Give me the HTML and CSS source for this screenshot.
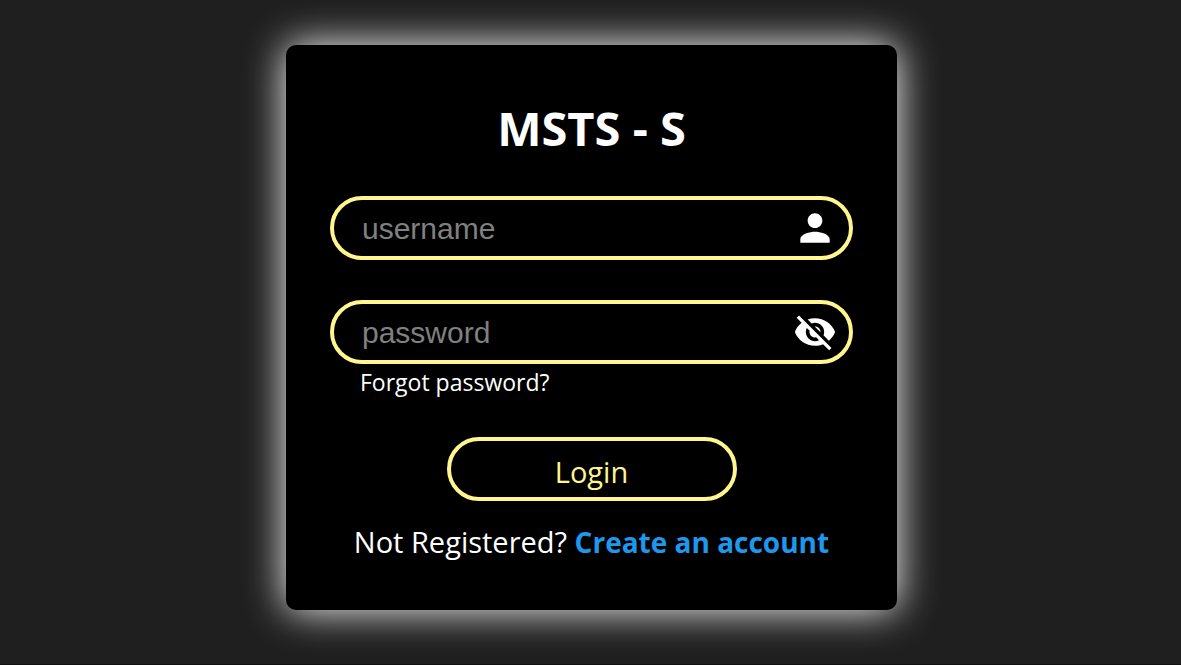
FILE: index.html
```html
<!DOCTYPE html>
<html lang="en">
<head>
<meta charset="utf-8">
<meta name="viewport" content="width=device-width, initial-scale=1">
<title>MSTS - S</title>
<link rel="stylesheet" href="styles.css">
</head>
<body>
<main class="card">
  <h1 class="title">MSTS - S</h1>
  <form class="form">
    <div class="field">
      <input class="input" type="text" placeholder="username" aria-label="username">
      <svg class="icon" viewBox="0 0 24 24" aria-hidden="true"><path d="M12 12c2.210 0 4-1.790 4-4s-1.790-4-4-4-4 1.790-4 4 1.790 4 4 4zm0 2c-2.670 0-8 1.340-8 4v2h16v-2c0-2.660-5.330-4-8-4z"/></svg>
    </div>
    <div class="field">
      <input class="input" type="password" placeholder="password" aria-label="password">
      <button class="toggle" type="button" aria-label="Show password">
        <svg class="icon" viewBox="0 0 24 24" aria-hidden="true"><path d="M12 7c2.760 0 5 2.240 5 5 0 .65-.13 1.260-.36 1.830l2.920 2.920c1.510-1.260 2.700-2.890 3.430-4.750-1.730-4.390-6-7.500-11-7.500-1.400 0-2.740.25-3.980.7l2.160 2.160C10.740 7.130 11.350 7 12 7zM2 4.270l2.280 2.280.46.46C3.080 8.300 1.780 10.020 1 12c1.730 4.390 6 7.500 11 7.500 1.550 0 3.030-.3 4.380-.84l.42.42L19.730 22 21 20.730 3.270 3 2 4.270zM7.530 9.800l1.550 1.550c-.05.21-.08.43-.08.65 0 1.660 1.340 3 3 3 .22 0 .44-.03.65-.08l1.550 1.550c-.67.33-1.410.53-2.200.53-2.760 0-5-2.240-5-5 0-.79.2-1.530.53-2.200zm4.310-.78l3.150 3.150.02-.16c0-1.660-1.340-3-3-3l-.17.01z"/></svg>
      </button>
    </div>
    <a class="forgot" href="#">Forgot password?</a>
    <button class="login" type="submit">Login</button>
  </form>
  <p class="register">Not Registered? <a class="create" href="#">Create an account</a></p>
</main>
</body>
</html>
```
FILE: styles.css
```css
* {
  box-sizing: border-box;
}

body {
  margin: 0;
  min-height: 100vh;
  padding: 36px 16px 45px 18px;
  display: flex;
  align-items: center;
  justify-content: center;
  background: #1f1f1f;
  border-bottom: 1px solid #111;
  color: #fff;
  font-family: "Segoe UI", "Open Sans", "Noto Sans", sans-serif;
}

.card {
  width: 100%;
  max-width: 611px;
  padding: 51px 44px 48px;
  border-radius: 10px;
  background: #000;
  box-shadow: 0 0 40px #fff;
}

.title {
  margin: 0 0 36px;
  font-size: 47px;
  line-height: 64px;
  font-weight: 700;
  text-align: center;
}

.form {
  display: flex;
  flex-direction: column;
}

.field {
  display: flex;
  align-items: center;
  height: 64px;
  padding: 0 12px 0 28px;
  border: 4px solid #fff68f;
  border-radius: 32px;
}

.field + .field {
  margin-top: 40px;
}

.input {
  flex: 1;
  min-width: 0;
  padding: 2px 0 0;
  border: 0;
  outline: 0;
  background: transparent;
  color: #fff;
  font: 30px/36px "Liberation Sans", Arial, sans-serif;
}

.input::placeholder {
  color: #808080;
  opacity: 1;
}

.icon {
  display: block;
  width: 44px;
  height: 44px;
  fill: #fff;
}

.toggle {
  padding: 0;
  border: 0;
  background: transparent;
}

.forgot {
  align-self: flex-start;
  margin: 2px 0 39px 30px;
  color: #fff;
  font-size: 23px;
  line-height: 32px;
  text-decoration: none;
}

.login {
  align-self: center;
  width: 290px;
  max-width: 100%;
  height: 64px;
  padding: 6px 0 0;
  border: 4px solid #fff68f;
  border-radius: 32px;
  background: transparent;
  color: #fff68f;
  font: 29px/40px "Segoe UI", "Open Sans", "Noto Sans", sans-serif;
}

.register {
  margin: 21px 0 0;
  font-size: 29px;
  line-height: 40px;
  text-align: center;
}

.create {
  color: #1e98ec;
  font-size: 28px;
  font-weight: 700;
  text-decoration: none;
}
```
